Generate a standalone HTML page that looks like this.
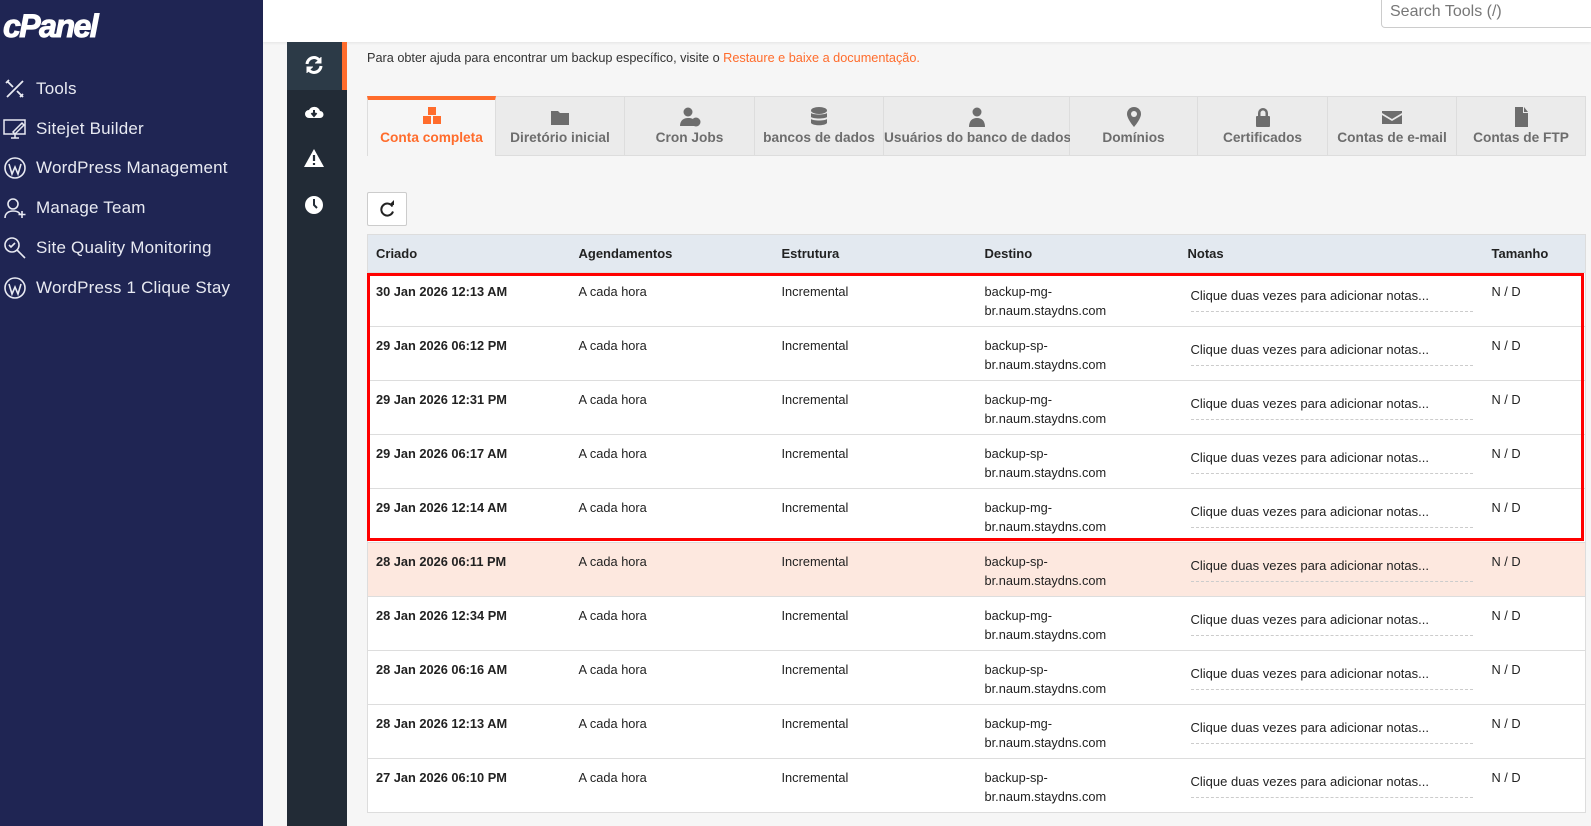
<!DOCTYPE html>
<html><head><meta charset="utf-8"><style>
*{margin:0;padding:0;box-sizing:border-box}
body{width:1591px;height:826px;overflow:hidden;background:#f6f6f6;font-family:"Liberation Sans",Arial,sans-serif;position:relative}
#side{position:absolute;left:0;top:0;width:263px;height:826px;background:#1f2553;color:#e8eaf2}
.logo{position:absolute;left:3px;top:8px;font:italic 900 32px "Liberation Sans",sans-serif;color:#fff;letter-spacing:-1.5px;-webkit-text-stroke:1px #fff}
.it{position:absolute;left:0;font-size:17px;display:flex;align-items:center;letter-spacing:.2px}
.it svg{width:24px;height:24px;margin:0 9px 0 3px}
#top{position:absolute;left:263px;top:0;right:0;height:42px;background:#fff;box-shadow:0 1px 3px rgba(0,0,0,.08)}
.search{position:absolute;left:1381px;top:0;width:215px;height:28px;border:1px solid #ccc;border-top:none;border-radius:0 0 0 4px;color:#777;font-size:16px;padding:3px 8px}
#bar{position:absolute;left:287px;top:42px;width:60px;bottom:0;background:#222b36}
#bar .act{position:absolute;left:0;top:0;width:60px;height:48px;background:#2c3a47;border-right:5px solid #ff6c2c}
.si{position:absolute;left:17px;width:20px;height:20px}
.intro{position:absolute;left:367px;top:51px;font-size:12.7px;color:#333}
.intro span{color:#ff6c2c}
.tabs{position:absolute;left:367px;top:96px;height:60px;width:1219px;display:flex}
.tab{height:60px;background:#ebebeb;border:1px solid #ddd;border-left:none;text-align:center;color:#6d6d6d;font-weight:bold;font-size:13.7px;padding-top:10px;white-space:nowrap}
.tab.a{background:#f6f6f6;border-top:4px solid #ff6c2c;color:#ff6c2c;border-bottom:none;border-left:1px solid #ddd;padding-top:7px}
.tab svg{display:block;margin:0 auto 3px;height:20px;width:22px;fill:#6d6d6d}
.tab.a svg{fill:#ff6c2c}
.btn{position:absolute;left:367px;top:192px;width:40px;height:34px;background:#fff;border:1px solid #ccc;border-radius:2px}
table{position:absolute;left:367px;top:234px;width:1219px;border-collapse:collapse;font-size:12.8px;color:#222;background:#fff;border:1px solid #ddd}
th{background:#e3e9f0;text-align:left;height:38px;font-weight:bold;padding-left:8px;font-size:13px;border-bottom:1px solid #ddd}
td{height:54px;vertical-align:top;padding:9px 0 0 8px;border-top:1px solid #ddd;line-height:19px}
td:first-child{font-weight:bold}
td.n{padding:0 0 0 11px;vertical-align:top}
td.n div{margin-top:15px;width:282px;border-bottom:1px dashed #ccc;padding:0 0 7px 0;line-height:16px;font-size:13px}
tr.hl td{background:#fde8df}
.red{position:absolute;left:367px;top:273px;width:1217px;height:268px;border:3px solid #f00;pointer-events:none}
</style></head><body>
<div id="side">
<div class="logo">cPanel</div>
<div class="it" style="top:77px"><svg viewBox="0 0 24 24" fill="none" stroke="#e8eaf2" stroke-width="1.8"><path d="M4 20L20 4M4 4l6 6M14 14l6 6M3 6l3-3M17 20l3-3"/></svg>Tools</div>
<div class="it" style="top:117px"><svg viewBox="0 0 24 24" fill="none" stroke="#e8eaf2" stroke-width="1.5"><rect x="1" y="3" width="21" height="14"/><path d="M8 21h8M12 17v4M10 15l9-9 2 2-9 9z"/></svg>Sitejet Builder</div>
<div class="it" style="top:156px"><svg viewBox="0 0 24 24" fill="none" stroke="#e8eaf2" stroke-width="1.6"><circle cx="12" cy="12" r="10"/><path d="M6 8l3 10 3-7 3 7 3-10"/></svg>WordPress Management</div>
<div class="it" style="top:196px"><svg viewBox="0 0 24 24" fill="none" stroke="#e8eaf2" stroke-width="1.6"><circle cx="10" cy="8" r="5"/><path d="M2 22c0-5 4-7 8-7s6 1 7 3M19 15v7M15.5 18.5h7"/></svg>Manage Team</div>
<div class="it" style="top:236px"><svg viewBox="0 0 24 24" fill="none" stroke="#e8eaf2" stroke-width="1.6"><circle cx="9" cy="9" r="7"/><path d="M14 14l8 8M6 9l2 2 4-4"/></svg>Site Quality Monitoring</div>
<div class="it" style="top:276px"><svg viewBox="0 0 24 24" fill="none" stroke="#e8eaf2" stroke-width="1.6"><circle cx="12" cy="12" r="10"/><path d="M6 8l3 10 3-7 3 7 3-10"/></svg>WordPress 1 Clique Stay</div>
</div>
<div id="top"></div>
<div class="search">Search Tools (/)</div>
<div id="bar"><div class="act"></div>
<svg class="si" style="top:13px" viewBox="0 0 20 20" fill="none" stroke="#fff" stroke-width="3"><path d="M3 9a7 7 0 0 1 13-3M17 11a7 7 0 0 1-13 3"/><path d="M17 2v6h-6M3 18v-6h6" fill="#fff" stroke-width="1"/></svg>
<svg class="si" style="top:60px" viewBox="0 0 20 20"><path d="M5 16a4 4 0 0 1 0-8 6 6 0 0 1 11 1 3.5 3.5 0 0 1 0 7z" fill="#fff"/><path d="M10 8v5M7.5 11l2.5 3 2.5-3" stroke="#222b36" stroke-width="2" fill="none"/></svg>
<svg class="si" style="top:106px" viewBox="0 0 20 20"><path d="M10 1L20 19H0z" fill="#fff"/><path d="M10 7v6M10 15v2" stroke="#222b36" stroke-width="2.2"/></svg>
<svg class="si" style="top:153px" viewBox="0 0 20 20"><circle cx="10" cy="10" r="9" fill="#fff"/><path d="M10 4v6l3 3" stroke="#222b36" stroke-width="2" fill="none"/></svg>
</div>
<div class="intro">Para obter ajuda para encontrar um backup específico, visite o <span>Restaure e baixe a documentação.</span></div>
<div class="tabs">
<div class="tab a" style="width:129px"><svg viewBox="0 0 22 20"><rect x="7" y="0" width="8" height="8"/><rect x="2" y="9" width="8" height="8"/><rect x="12" y="9" width="8" height="8"/></svg>Conta completa</div>
<div class="tab" style="width:129px"><svg viewBox="0 0 22 20"><path d="M2 4h7l2 2h9v12H2z"/></svg>Diretório inicial</div>
<div class="tab" style="width:130px"><svg viewBox="0 0 22 20"><circle cx="9" cy="5" r="4.5"/><path d="M1 19c0-6 4-8 8-8s5 1 6 2v6z"/><circle cx="17" cy="15" r="4.5"/></svg>Cron Jobs</div>
<div class="tab" style="width:129px"><svg viewBox="0 0 22 20"><ellipse cx="11" cy="3.5" rx="8" ry="3.5"/><path d="M3 6c2 2 14 2 16 0v4c-2 2-14 2-16 0zM3 12c2 2 14 2 16 0v4c-2 3-14 3-16 0z"/></svg>bancos de dados</div>
<div class="tab" style="width:186px"><svg viewBox="0 0 22 20"><circle cx="11" cy="5" r="4.5"/><path d="M3 20c0-6 3-9 8-9s8 3 8 9z"/></svg>Usuários do banco de dados</div>
<div class="tab" style="width:128px"><svg viewBox="0 0 22 20"><path d="M11 0a7 7 0 0 1 7 7c0 5-7 13-7 13S4 12 4 7a7 7 0 0 1 7-7z"/><circle cx="11" cy="7" r="3" fill="#ebebeb"/></svg>Domínios</div>
<div class="tab" style="width:130px"><svg viewBox="0 0 22 20"><path d="M6 9V6a5 5 0 0 1 10 0v3h-2.5V6a2.5 2.5 0 0 0-5 0v3z"/><rect x="4" y="9" width="14" height="11" rx="1"/></svg>Certificados</div>
<div class="tab" style="width:129px"><svg viewBox="0 0 22 20"><path d="M1 4h20v2l-10 6-10-6zM1 8l10 6 10-6v9H1z"/></svg>Contas de e-mail</div>
<div class="tab" style="width:129px"><svg viewBox="0 0 22 20"><path d="M5 0h8v6h5v14H5zM14 0l4 5h-4z"/></svg>Contas de FTP</div>
</div>
<div class="btn"><svg width="40" height="34" viewBox="0 0 40 34"><path d="M24.5 13.5a6 6 0 1 0 .5 5" fill="none" stroke="#222" stroke-width="2"/><path d="M21 12h5v-5z" fill="#222"/></svg></div>
<table>
<tr><th style="width:203px">Criado</th><th style="width:203px">Agendamentos</th><th style="width:203px">Estrutura</th><th style="width:203px">Destino</th><th style="width:304px">Notas</th><th>Tamanho</th></tr>
<tr><td>30 Jan 2026 12:13 AM</td><td>A cada hora</td><td>Incremental</td><td>backup-mg-<br>br.naum.staydns.com</td><td class="n"><div>Clique duas vezes para adicionar notas...</div></td><td>N / D</td></tr>
<tr><td>29 Jan 2026 06:12 PM</td><td>A cada hora</td><td>Incremental</td><td>backup-sp-<br>br.naum.staydns.com</td><td class="n"><div>Clique duas vezes para adicionar notas...</div></td><td>N / D</td></tr>
<tr><td>29 Jan 2026 12:31 PM</td><td>A cada hora</td><td>Incremental</td><td>backup-mg-<br>br.naum.staydns.com</td><td class="n"><div>Clique duas vezes para adicionar notas...</div></td><td>N / D</td></tr>
<tr><td>29 Jan 2026 06:17 AM</td><td>A cada hora</td><td>Incremental</td><td>backup-sp-<br>br.naum.staydns.com</td><td class="n"><div>Clique duas vezes para adicionar notas...</div></td><td>N / D</td></tr>
<tr><td>29 Jan 2026 12:14 AM</td><td>A cada hora</td><td>Incremental</td><td>backup-mg-<br>br.naum.staydns.com</td><td class="n"><div>Clique duas vezes para adicionar notas...</div></td><td>N / D</td></tr>
<tr class="hl"><td>28 Jan 2026 06:11 PM</td><td>A cada hora</td><td>Incremental</td><td>backup-sp-<br>br.naum.staydns.com</td><td class="n"><div>Clique duas vezes para adicionar notas...</div></td><td>N / D</td></tr>
<tr><td>28 Jan 2026 12:34 PM</td><td>A cada hora</td><td>Incremental</td><td>backup-mg-<br>br.naum.staydns.com</td><td class="n"><div>Clique duas vezes para adicionar notas...</div></td><td>N / D</td></tr>
<tr><td>28 Jan 2026 06:16 AM</td><td>A cada hora</td><td>Incremental</td><td>backup-sp-<br>br.naum.staydns.com</td><td class="n"><div>Clique duas vezes para adicionar notas...</div></td><td>N / D</td></tr>
<tr><td>28 Jan 2026 12:13 AM</td><td>A cada hora</td><td>Incremental</td><td>backup-mg-<br>br.naum.staydns.com</td><td class="n"><div>Clique duas vezes para adicionar notas...</div></td><td>N / D</td></tr>
<tr><td>27 Jan 2026 06:10 PM</td><td>A cada hora</td><td>Incremental</td><td>backup-sp-<br>br.naum.staydns.com</td><td class="n"><div>Clique duas vezes para adicionar notas...</div></td><td>N / D</td></tr>
</table>
<div class="red"></div>
</body></html>
